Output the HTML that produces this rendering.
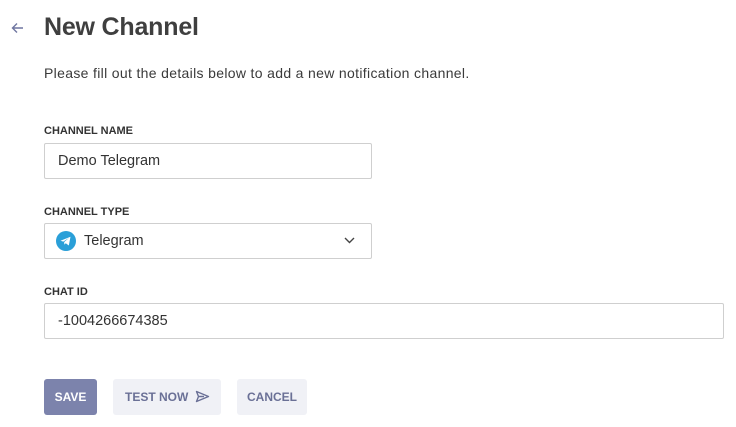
<!DOCTYPE html>
<html><head><meta charset="utf-8"><style>
*{box-sizing:border-box;margin:0;padding:0}
body{width:736px;height:427px;background:#fff;font-family:"Liberation Sans",sans-serif;color:#3d3d3d;position:relative;overflow:hidden}
.abs{position:absolute}
h1{position:absolute;left:44px;top:13px;font-size:25px;font-weight:bold;color:#3f3f3f;letter-spacing:-0.2px}
.desc{left:44px;top:65px;font-size:14px;color:#3a3a3a;letter-spacing:0.33px}
.lab{font-size:11px;font-weight:bold;color:#333;left:44px}
.inp{left:44px;border:1px solid #cfcfcf;border-radius:2px;height:36px;font-size:14.5px;padding-left:13px;line-height:34px;color:#333}
.btn{top:379px;height:36px;border-radius:3px;font-size:12px;font-weight:bold;line-height:36px;text-align:center}
</style></head><body>
<svg class="abs" style="left:11px;top:22px" width="13" height="12" viewBox="0 0 13 12"><path d="M12 6H2M6 1.5L1.5 6 6 10.5" stroke="#6e75a0" stroke-width="1.4" fill="none"/></svg>
<h1>New Channel</h1>
<div class="abs desc">Please fill out the details below to add a new notification channel.</div>
<div class="abs lab" style="top:125px">CHANNEL NAME</div>
<div class="abs inp" style="top:143px;width:328px">Demo Telegram</div>
<div class="abs lab" style="top:206px">CHANNEL TYPE</div>
<div class="abs inp" style="top:223px;width:328px;padding-left:39px">Telegram</div>
<svg class="abs" style="left:56px;top:231px" width="20" height="20" viewBox="0 0 20 20"><circle cx="10" cy="10" r="10" fill="#2a9fd8"/><path d="M4.5 9.8L14.5 5.8 12.8 14.5 9.8 12.2 8.3 13.6 8.2 11 13 6.9 7.3 10.6z" fill="#fff"/></svg>
<svg class="abs" style="left:344px;top:237px" width="11" height="7" viewBox="0 0 11 7"><path d="M1 1l4.5 4.5L10 1" stroke="#444" stroke-width="1.4" fill="none"/></svg>
<div class="abs lab" style="top:286px">CHAT ID</div>
<div class="abs inp" style="top:303px;width:680px">-1004266674385</div>
<div class="abs btn" style="left:44px;width:53px;background:#7c83ac;color:#fff">SAVE</div>
<div class="abs btn" style="left:113px;width:108px;background:#f0f1f6;color:#6a7096;text-align:left;padding-left:12px">TEST NOW</div>
<svg class="abs" style="left:195px;top:390px" width="15" height="13" viewBox="0 0 15 13"><path d="M1.5 1.5L13.5 6.5 1.5 11.5 3.5 6.5zM3.5 6.5H9" stroke="#6a7096" stroke-width="1.4" fill="none" stroke-linejoin="round"/></svg>
<div class="abs btn" style="left:237px;width:70px;background:#f0f1f6;color:#6a7096">CANCEL</div>
</body></html>
